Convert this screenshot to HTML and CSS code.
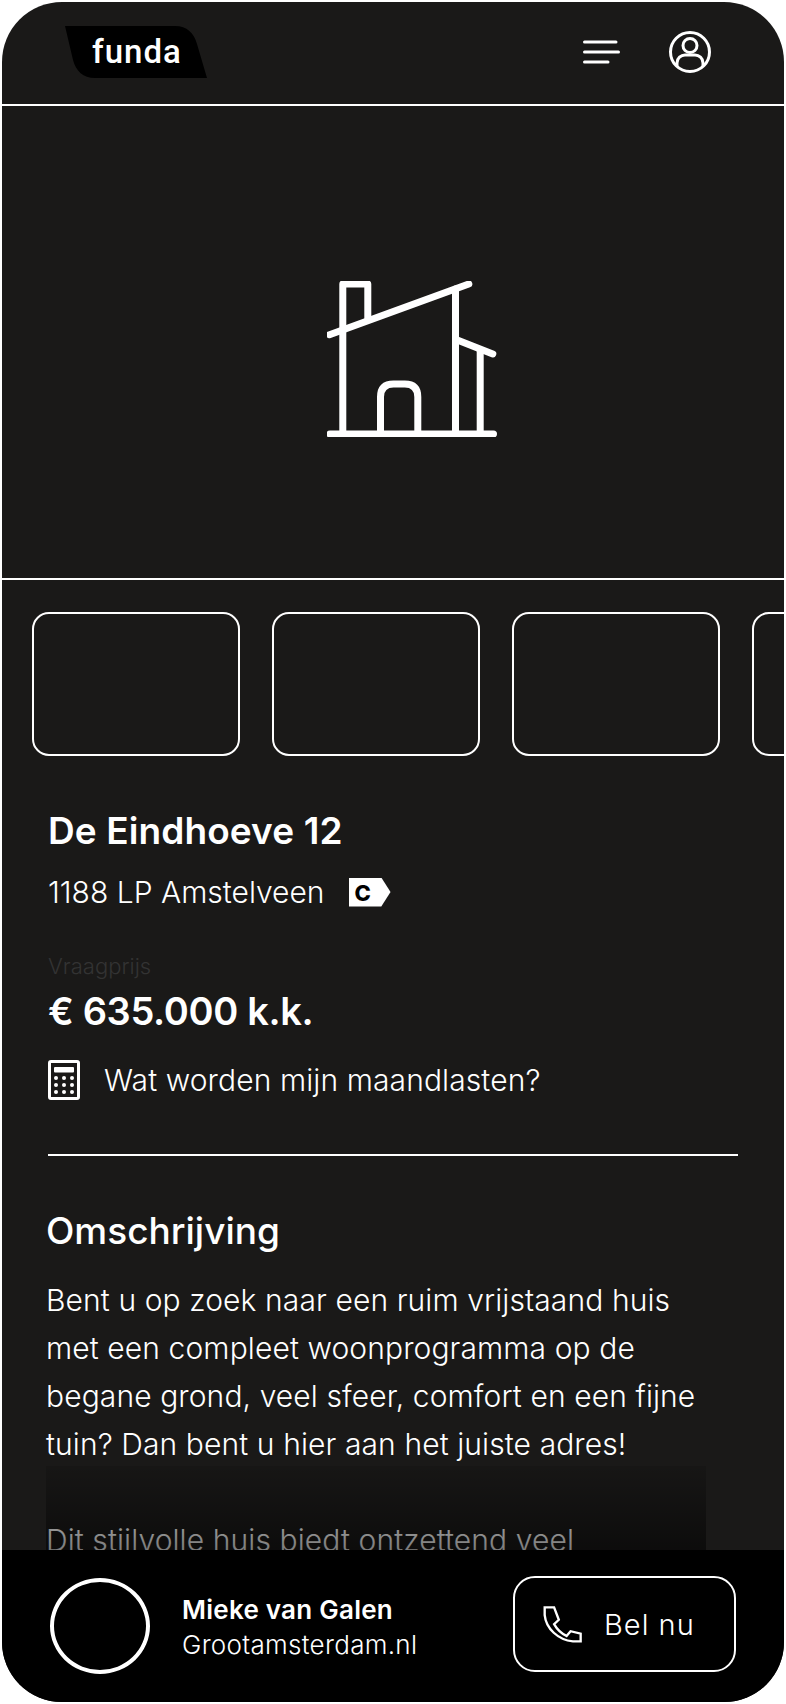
FILE: index.html
```html
<!DOCTYPE html>
<html lang="nl">
<head>
<meta charset="utf-8">
<title>De Eindhoeve 12</title>
<link rel="stylesheet" href="styles.css">
</head>
<body>
<div class="phone">
  <header class="topbar">
    <div class="logo">
      <svg class="logo-shape" viewBox="0 0 142 52"><path d="M0 0H110C122 0 129 7 132 18L142 52H30C18 52 11 45 8 34Z"/></svg>
      <span class="logo-text">funda</span>
    </div>
    <div class="top-icons">
      <svg class="menu-icon" viewBox="0 0 37 24" fill="none" stroke="#fff" stroke-width="3" stroke-linecap="round"><path d="M1.5 2H33M1.5 12H35.5M1.5 22H25"/></svg>
      <svg class="user-icon" viewBox="0 0 44 44" fill="none" stroke="#fff" stroke-width="3"><circle cx="22" cy="22" r="19.5"/><circle cx="22" cy="15.5" r="7"/><path d="M9 36V33C9 28 13 25 17 25H27C31 25 35 28 35 33V36"/></svg>
    </div>
  </header>
  <section class="hero">
    <svg class="house" viewBox="0 0 172 156" fill="none" stroke="#fff" stroke-width="7" stroke-linecap="round" stroke-linejoin="round">
      <path d="M3 153H166.5"/>
      <path d="M2.5 53.7L141.8 3"/>
      <path d="M15.8 153V3H40.8V37"/>
      <path d="M128.5 8V153"/>
      <path d="M129 58.6L165.8 73"/>
      <path d="M153.2 70V153"/>
      <path d="M53.5 153V116Q53.5 103 66.5 103H77.8Q90.8 103 90.8 116V153"/>
    </svg>
  </section>
  <div class="thumbs">
    <div class="thumb"></div>
    <div class="thumb"></div>
    <div class="thumb"></div>
    <div class="thumb"></div>
  </div>
  <main class="content">
    <h1 class="street">De Eindhoeve 12</h1>
    <div class="address-row">
      <span class="address">1188 LP Amstelveen</span>
      <span class="energy">C</span>
    </div>
    <div class="price-label">Vraagprijs</div>
    <div class="price">€ 635.000 k.k.</div>
    <div class="costs">
      <svg class="calc" viewBox="0 0 32 40">
        <rect x="1.5" y="1.5" width="29" height="37" rx="1.5" fill="none" stroke="#fff" stroke-width="3"/>
        <rect x="6" y="7" width="20" height="5.5" rx="1" fill="#fff"/>
        <g fill="#fff">
          <circle cx="8" cy="18" r="2"/><circle cx="16" cy="18" r="2"/><circle cx="24" cy="18" r="2"/>
          <circle cx="8" cy="25" r="2"/><circle cx="16" cy="25" r="2"/><circle cx="24" cy="25" r="2"/>
          <circle cx="8" cy="32" r="2"/><circle cx="16" cy="32" r="2"/><circle cx="24" cy="32" r="2"/>
        </g>
      </svg>
      <span class="costs-text">Wat worden mijn maandlasten?</span>
    </div>
    <hr class="divider">
    <section class="description">
      <h2 class="desc-title">Omschrijving</h2>
      <p class="desc-text">Bent u op zoek naar een ruim vrijstaand huis<br>met een compleet woonprogramma op de<br>begane grond, veel sfeer, comfort en een fijne<br>tuin? Dan bent u hier aan het juiste adres!<br><br>Dit stijlvolle huis biedt ontzettend veel</p>
      <div class="fade"></div>
    </section>
  </main>
  <footer class="agent-bar">
    <div class="avatar"></div>
    <div class="agent">
      <div class="agent-name">Mieke van Galen</div>
      <div class="agent-org">Grootamsterdam.nl</div>
    </div>
    <button class="call">
      <svg class="phone-icon" viewBox="125 143 116 110" fill="none" stroke="#fff" stroke-width="7" stroke-linejoin="miter"><path d="M130 147H158L172 184L158 197C167 213 180 225 195 232L207 218L237 225V248H214C170 244 134 210 130 170Z"/></svg>
      <span>Bel nu</span>
    </button>
  </footer>
</div>
</body>
</html>
```

FILE: styles.css
```css
* { box-sizing: border-box; }
html, body { margin: 0; padding: 0; background: #fff; }
body { font-family: "Inter", "Liberation Sans", sans-serif; color: #fff; }
.phone {
  width: 782px; height: 1700px; margin: 2px;
  border-radius: 60px; overflow: hidden;
  background: #1a1918;
  display: flex; flex-direction: column;
}
.topbar {
  flex: 0 0 104px; border-bottom: 2px solid #fff;
  display: flex; align-items: flex-start; justify-content: space-between;
  padding: 24px 72px 0 63px;
}
.logo { position: relative; width: 142px; height: 52px; display: flex; align-items: center; justify-content: center; padding-left: 2px; }
.logo-shape { position: absolute; inset: 0; width: 142px; height: 52px; fill: #000; }
.logo-text { position: relative; font-family: "Roboto", sans-serif; font-weight: 500; font-size: 33px; line-height: 52px; letter-spacing: 1px; }
.top-icons { display: flex; align-items: center; gap: 48px; padding-top: 4px; }
.menu-icon { width: 37px; height: 24px; }
.user-icon { width: 44px; height: 44px; }
.hero { flex: 0 0 474px; border-bottom: 2px solid #fff; display: flex; align-items: center; justify-content: center; padding: 34px 0 0 39px; }
.house { width: 172px; height: 156px; }
.thumbs { flex: 0 0 auto; display: flex; gap: 32px; padding: 32px 0 0 30px; overflow: hidden; }
.thumb { flex: 0 0 208px; height: 144px; border: 2px solid #fff; border-radius: 17px; }
.content { flex: 1 1 0; min-height: 0; overflow: hidden; padding: 51px 46px 0 44px; }
.street { margin: 0 0 0 2px; font-size: 37px; line-height: 48px; font-weight: 600; letter-spacing: .1px; }
.address-row { display: flex; align-items: center; gap: 24px; margin: 13px 0 0 2px; height: 48px; }
.address { font-size: 30px; line-height: 48px; font-weight: 300; }
.energy {
  width: 42px; height: 29px; background: #fff; color: #000;
  font-size: 22px; font-weight: 800; line-height: 30px; padding-left: 6px;
  clip-path: polygon(0 0, 78% 0, 100% 50%, 78% 100%, 0 100%);
}
.price-label { margin: 34px 0 0 2px; color: #333; font-size: 22px; line-height: 32px; font-weight: 300; }
.price { margin: 5px 0 0 2px; font-size: 38px; line-height: 48px; font-weight: 600; letter-spacing: -.35px; }
.costs { display: flex; align-items: center; gap: 24px; margin: 25px 0 0 2px; }
.calc { width: 32px; height: 40px; flex: none; }
.costs-text { font-size: 30px; line-height: 40px; font-weight: 300; letter-spacing: .1px; }
.divider { border: 0; border-top: 2px solid #fff; margin: 54px 0 0 2px; width: 690px; }
.description { position: relative; margin-top: 0; }
.desc-title { margin: 51px 0 0; font-size: 37px; line-height: 48px; font-weight: 500; letter-spacing: 0; }
.desc-text { margin: 21px 0 0; font-size: 30px; line-height: 48px; font-weight: 300; white-space: nowrap; letter-spacing: .1px; }
.fade {
  position: absolute; left: 0; width: 660px; top: 259px; height: 91px;
  background: linear-gradient(to bottom, rgba(0,0,0,.12), rgba(0,0,0,.55));
}
.agent-bar {
  flex: 0 0 152px; background: #000;
  display: flex; align-items: flex-start; padding: 26px 0 0 48px;
  position: relative;
}
.avatar { width: 100px; height: 96px; margin-top: 2px; border: 4px solid #fff; border-radius: 50%; flex: none; }
.agent { margin: 16px 0 0 32px; width: 330px; flex: none; }
.agent-name { font-size: 26px; line-height: 35px; font-weight: 600; letter-spacing: .25px; }
.agent-org { font-size: 26px; line-height: 35px; font-weight: 300; letter-spacing: .3px; }
.call {
  width: 223px; height: 96px; background: transparent; color: #fff;
  border: 2px solid #fff; border-radius: 22px; padding: 0 0 0 28px;
  display: flex; align-items: center; gap: 22px; flex: none;
  font-family: inherit; font-weight: 300; font-size: 29px; letter-spacing: 1px; margin-left: 1px;
}
.phone-icon { width: 39px; height: 37px; flex: none; }
```
